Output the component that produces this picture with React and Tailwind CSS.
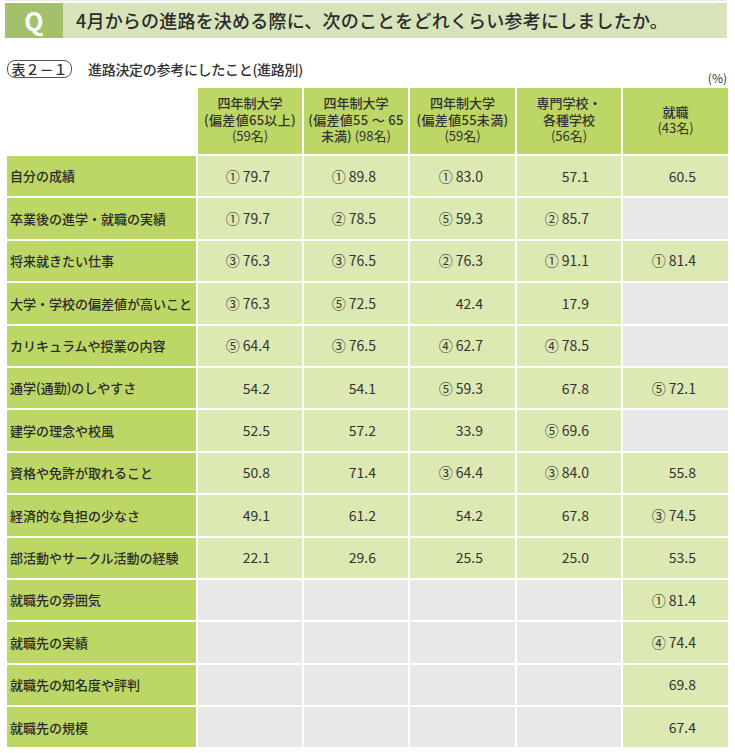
import React from "react";

const rows = [
  ["自分の成績", ["① 79.7", "① 89.8", "① 83.0", "57.1", "60.5"]],
  ["卒業後の進学・就職の実績", ["① 79.7", "② 78.5", "⑤ 59.3", "② 85.7", null]],
  ["将来就きたい仕事", ["③ 76.3", "③ 76.5", "② 76.3", "① 91.1", "① 81.4"]],
  ["大学・学校の偏差値が高いこと", ["③ 76.3", "⑤ 72.5", "42.4", "17.9", null]],
  ["カリキュラムや授業の内容", ["⑤ 64.4", "③ 76.5", "④ 62.7", "④ 78.5", null]],
  ["通学(通勤)のしやすさ", ["54.2", "54.1", "⑤ 59.3", "67.8", "⑤ 72.1"]],
  ["建学の理念や校風", ["52.5", "57.2", "33.9", "⑤ 69.6", null]],
  ["資格や免許が取れること", ["50.8", "71.4", "③ 64.4", "③ 84.0", "55.8"]],
  ["経済的な負担の少なさ", ["49.1", "61.2", "54.2", "67.8", "③ 74.5"]],
  ["部活動やサークル活動の経験", ["22.1", "29.6", "25.5", "25.0", "53.5"]],
  ["就職先の雰囲気", [null, null, null, null, "① 81.4"]],
  ["就職先の実績", [null, null, null, null, "④ 74.4"]],
  ["就職先の知名度や評判", [null, null, null, null, "69.8"]],
  ["就職先の規模", [null, null, null, null, "67.4"]],
];

const font = { fontFamily: '"Noto Sans CJK JP", "Noto Sans", sans-serif' };

function Head({ children }) {
  return (
    <div className="bg-[#bdd766] flex flex-col items-center justify-center text-[13px] leading-[16.5px] text-[#333] text-center pb-[2px]">
      {children}
    </div>
  );
}

export default function App() {
  return (
    <div className="w-[735px] h-[753px] bg-white text-[#333] overflow-hidden" style={font}>
      <div className="border-t border-dotted border-[#d9d9d9] mx-[5px] w-[722px]" />
      <div className="mt-[2px] mx-[5px] w-[722px] h-[35px] flex bg-[#d7e3b9]">
        <div className="w-[58px] bg-[#a5c06c] flex items-center justify-center text-white text-[25px] font-bold leading-none pb-[1px]">
          Q
        </div>
        <div className="pl-[13px] flex items-center text-[18px] font-medium tracking-[0.2px] text-[#2b2b2b]">
          4月からの進路を決める際に、次のことをどれくらい参考にしましたか。
        </div>
      </div>
      <div className="mt-[22px] ml-[7px] flex items-center h-[18px]">
        <div className="h-[18px] w-[65px] border border-[#555] rounded-[8px] flex items-center justify-center text-[14px] font-medium leading-none">
          表２－１
        </div>
        <div className="ml-[16px] text-[14px] tracking-[-0.3px] font-medium leading-none">
          進路決定の参考にしたこと(進路別)
        </div>
      </div>
      <div className="w-[728px] text-right text-[12px] leading-[10px] mt-[-5px] pr-[1px]">(%)</div>
      <div className="ml-[7px] mt-[5px] grid grid-cols-[189px_104px_104px_105px_104px_105px] grid-rows-[66px] auto-rows-[40.4px] gap-[2px]">
        <div className="bg-white" />
        <Head>
          <span className="font-medium">四年制大学</span>
          <span className="font-medium tracking-[0.3px]">(偏差値65以上)</span>
          <span>(59名)</span>
        </Head>
        <Head>
          <span className="font-medium">四年制大学</span>
          <span className="font-medium tracking-[0.3px]">(偏差値55 ～ 65</span>
          <span><span className="font-medium">未満)</span> (98名)</span>
        </Head>
        <Head>
          <span className="font-medium">四年制大学</span>
          <span className="font-medium tracking-[0.3px]">(偏差値55未満)</span>
          <span>(59名)</span>
        </Head>
        <Head>
          <span className="font-medium">専門学校・</span>
          <span className="font-medium">各種学校</span>
          <span>(56名)</span>
        </Head>
        <Head>
          <span className="font-medium">就職</span>
          <span>(43名)</span>
        </Head>
        {rows.map(([label, vals]) => (
          <React.Fragment key={label}>
            <div className="bg-[#bdd766] flex items-center pl-[3px] text-[13px] font-medium text-[#2b2b2b] whitespace-nowrap">
              {label}
            </div>
            {vals.map((v, i) =>
              v === null ? (
                <div key={i} className="bg-[#e7e8e7]" />
              ) : (
                <div
                  key={i}
                  className="bg-[#dce9b3] flex items-center justify-end pr-[32px] text-[14px] text-[#333]"
                >
                  {v}
                </div>
              )
            )}
          </React.Fragment>
        ))}
      </div>
    </div>
  );
}
